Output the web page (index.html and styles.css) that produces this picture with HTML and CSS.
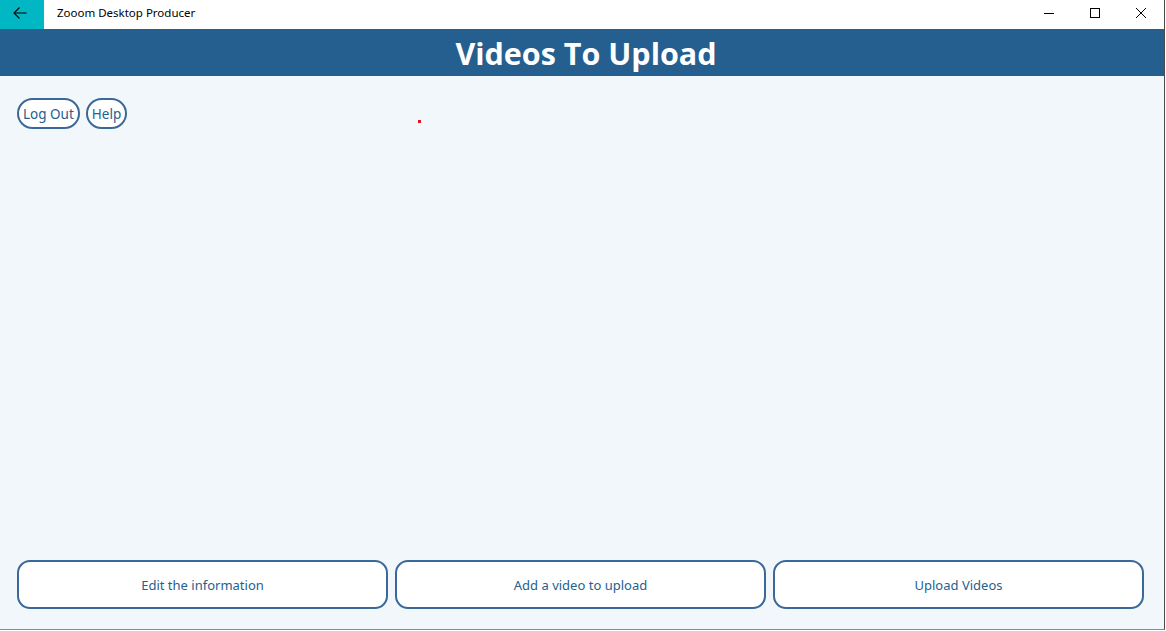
FILE: index.html
```html
<!DOCTYPE html>
<html>
<head>
<meta charset="utf-8">
<title>Zooom Desktop Producer</title>
<link rel="stylesheet" href="styles.css">
</head>
<body>
<div class="window">
  <div class="titlebar">
    <div class="back">
      <svg width="16" height="16" viewBox="0 0 16 16"><path d="M14.5 8H2M7.5 2.5L2 8l5.5 5.5" fill="none" stroke="#000" stroke-width="1.1"/></svg>
    </div>
    <div class="app-title">Zooom Desktop Producer</div>
    <div class="controls">
      <div class="ctl"><svg width="12" height="12" viewBox="0 0 12 12"><path d="M1 6.5h10" stroke="#000" stroke-width="1"/></svg></div>
      <div class="ctl"><svg width="12" height="12" viewBox="0 0 12 12"><rect x="1.5" y="1.5" width="9" height="9" fill="none" stroke="#000" stroke-width="1"/></svg></div>
      <div class="ctl"><svg width="12" height="12" viewBox="0 0 12 12"><path d="M1 1l10 10M11 1L1 11" stroke="#000" stroke-width="1"/></svg></div>
    </div>
  </div>
  <div class="header">Videos To Upload</div>
  <div class="content">
    <div class="top-actions">
      <button class="pill">Log Out</button>
      <button class="pill">Help</button>
      <span class="dot"></span>
    </div>
    <div class="bottom-actions">
      <button class="big">Edit the information</button>
      <button class="big">Add a video to upload</button>
      <button class="big">Upload Videos</button>
    </div>
  </div>
</div>
</body>
</html>
```
FILE: styles.css
```css
html, body {
  margin: 0;
  padding: 0;
  background: #ffffff;
}
.window {
  width: 1164px;
  height: 629px;
  border-right: 1px solid #4a4a4a;
  border-bottom: 1px solid #8a8a8a;
  display: flex;
  flex-direction: column;
  font-family: "Noto Sans", "Open Sans", sans-serif;
}
.titlebar {
  height: 29px;
  background: #ffffff;
  display: flex;
  align-items: center;
  flex-shrink: 0;
}
.back {
  width: 44px;
  height: 29px;
  background: #00b7c3;
  display: flex;
  align-items: center;
  justify-content: center;
}
.back svg { margin-left: -4px; margin-top: -4px; }
.app-title {
  margin-left: 13px;
  font-size: 11.5px;
  color: #000;
  margin-top: -5px;
}
.controls {
  margin-left: auto;
  display: flex;
  height: 29px;
}
.ctl {
  width: 46px;
  height: 29px;
  display: flex;
  align-items: center;
  justify-content: center;
}
.ctl svg { margin-top: -4px; }
.header {
  height: 47px;
  background: #245f8f;
  color: #ffffff;
  font-family: "Open Sans", "Noto Sans", sans-serif;
  font-weight: 700;
  font-size: 30.5px;
  display: flex;
  align-items: center;
  justify-content: center;
  flex-shrink: 0;
  padding-left: 8px;
}
.content {
  flex: 1;
  background: #f2f7fb;
  display: flex;
  flex-direction: column;
  justify-content: space-between;
  padding: 22px 20px 20px 17px;
}
.top-actions {
  display: flex;
  gap: 6px;
  position: relative;
}
.pill {
  height: 31px;
  padding: 0 4px;
  border: 2px solid #3a6898;
  border-radius: 16px;
  background: #ffffff;
  color: #245f8f;
  font-family: "Noto Sans", "Open Sans", sans-serif;
  font-size: 13.5px;
}
.dot {
  position: absolute;
  left: 401px;
  top: 22px;
  width: 3px;
  height: 3px;
  background: #e81123;
}
.bottom-actions {
  display: grid;
  grid-template-columns: 1fr 1fr 1fr;
  gap: 7px;
}
.big {
  height: 49px;
  border: 2px solid #3a6898;
  border-radius: 13px;
  background: #ffffff;
  color: #245f8f;
  font-family: "Noto Sans", "Open Sans", sans-serif;
  font-size: 13px;
  padding-top: 2px;
}
```
